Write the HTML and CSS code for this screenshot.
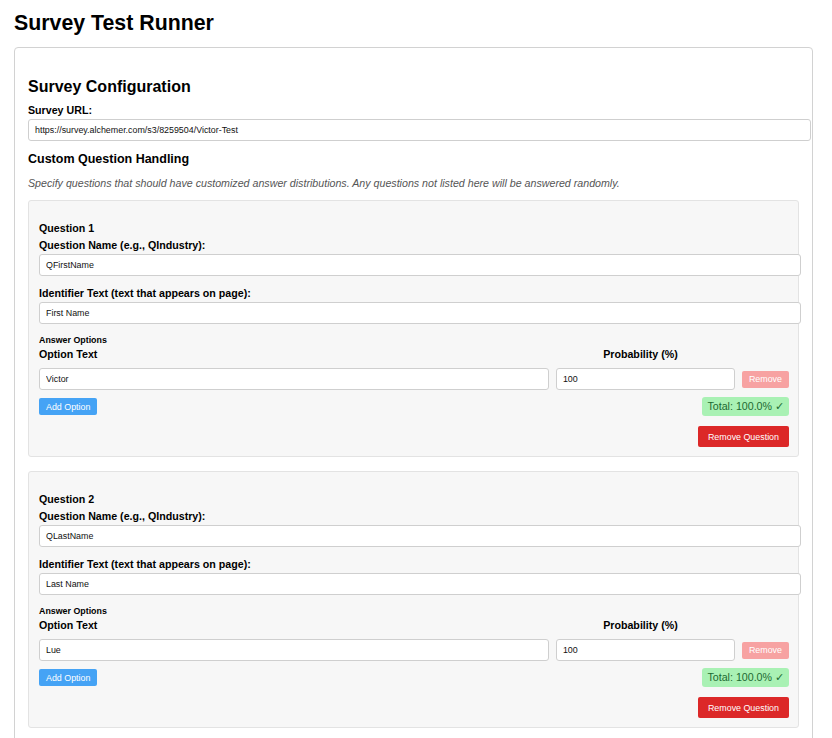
FILE: index.html
```html
<!DOCTYPE html>
<html lang="en">
<head>
<meta charset="utf-8">
<title>Survey Test Runner</title>
<link rel="stylesheet" href="styles.css">
</head>
<body>
<h1 class="page-title">Survey Test Runner</h1>
<div class="panel">
  <h2 class="panel-title">Survey Configuration</h2>
  <label class="field-label url-label">Survey URL:</label>
  <input class="text-input" type="text" value="https://survey.alchemer.com/s3/8259504/Victor-Test">

  <h3 class="section-title">Custom Question Handling</h3>
  <p class="section-desc">Specify questions that should have customized answer distributions. Any questions not listed here will be answered randomly.</p>

  <div class="question">
    <h4 class="question-title">Question 1</h4>
    <div class="field">
      <label class="field-label">Question Name (e.g., QIndustry):</label>
      <input class="text-input" type="text" value="QFirstName">
    </div>
    <div class="field">
      <label class="field-label">Identifier Text (text that appears on page):</label>
      <input class="text-input" type="text" value="First Name">
    </div>
    <h5 class="options-title">Answer Options</h5>
    <div class="options-head">
      <span class="col-text">Option Text</span>
      <span class="col-prob">Probability (%)</span>
    </div>
    <div class="option-row">
      <input class="text-input opt-text" type="text" value="Victor">
      <input class="text-input opt-prob" type="text" value="100">
      <button class="btn btn-remove" disabled>Remove</button>
    </div>
    <div class="option-actions">
      <button class="btn btn-add">Add Option</button>
      <span class="total-badge">Total: 100.0% ✓</span>
    </div>
    <div class="question-actions">
      <button class="btn btn-remove-q">Remove Question</button>
    </div>
  </div>

  <div class="question">
    <h4 class="question-title">Question 2</h4>
    <div class="field">
      <label class="field-label">Question Name (e.g., QIndustry):</label>
      <input class="text-input" type="text" value="QLastName">
    </div>
    <div class="field">
      <label class="field-label">Identifier Text (text that appears on page):</label>
      <input class="text-input" type="text" value="Last Name">
    </div>
    <h5 class="options-title">Answer Options</h5>
    <div class="options-head">
      <span class="col-text">Option Text</span>
      <span class="col-prob">Probability (%)</span>
    </div>
    <div class="option-row">
      <input class="text-input opt-text" type="text" value="Lue">
      <input class="text-input opt-prob" type="text" value="100">
      <button class="btn btn-remove" disabled>Remove</button>
    </div>
    <div class="option-actions">
      <button class="btn btn-add">Add Option</button>
      <span class="total-badge">Total: 100.0% ✓</span>
    </div>
    <div class="question-actions">
      <button class="btn btn-remove-q">Remove Question</button>
    </div>
  </div>
</div>
</body>
</html>
```

FILE: styles.css
```css
html, body {
  background: #ffffff;
}
body {
  margin: 0;
  padding: 11px 19px 0 14px;
  font-family: "Liberation Sans", Arial, sans-serif;
  font-size: 10.67px;
  color: #000;
  overflow: hidden;
}
.page-title {
  font-size: 21.33px;
  line-height: 25px;
  font-weight: bold;
  margin: 0 0 11px;
}
.panel {
  border: 1px solid #d2d2d2;
  border-radius: 4px;
  padding: 13px;
}
.panel-title {
  font-size: 16px;
  line-height: 18px;
  font-weight: bold;
  margin: 17px 0 8px;
}
.field-label {
  display: block;
  font-weight: bold;
  font-size: 10.67px;
  line-height: 13px;
  margin-bottom: 2px;
}
.text-input {
  display: block;
  box-sizing: border-box;
  width: calc(100% + 12px);
  height: 22px;
  padding: 0 6px;
  margin: 0;
  border: 1px solid #cfcfcf;
  border-radius: 3px;
  background: #fff;
  font-family: "Liberation Sans", Arial, sans-serif;
  font-size: 8.9px;
  color: #111;
  outline: none;
}
.section-title {
  font-size: 12.5px;
  line-height: 15px;
  font-weight: bold;
  margin: 11px 0 10px;
}
.section-desc {
  font-style: italic;
  color: #555;
  font-size: 10.67px;
  line-height: 13px;
  margin: 0 0 10px;
}
.question {
  background: #f7f7f7;
  border: 1px solid #e3e3e3;
  border-radius: 3px;
  padding: 10px 9px 9px 10px;
  margin-bottom: 14px;
}
.question-title {
  font-size: 10.67px;
  line-height: 12px;
  font-weight: bold;
  margin: 11px 0 5px;
}
.field {
  margin-bottom: 11px;
}
.options-title {
  font-size: 8.85px;
  line-height: 10px;
  font-weight: bold;
  margin: 0 0 3px;
}
.options-head {
  display: flex;
  gap: 6.67px;
  font-weight: bold;
  font-size: 10.67px;
  line-height: 13px;
  margin-bottom: 7px;
}
.col-text {
  flex: 3 1 0;
}
.col-prob {
  flex: 1 1 0;
}
.option-row {
  display: flex;
  align-items: center;
  gap: 6.67px;
  margin-bottom: 7px;
}
.option-row .text-input {
  width: auto;
  min-width: 0;
}
.opt-text {
  flex: 3 1 0;
}
.opt-prob {
  flex: 1 1 0;
}
.btn {
  border: none;
  border-radius: 2px;
  color: #fff;
  font-family: "Liberation Sans", Arial, sans-serif;
  font-size: 8.9px;
  padding: 0 7px;
  height: 17px;
  cursor: pointer;
}
.btn-remove {
  background: #f7a2a2;
  flex: none;
}
.btn-add {
  background: #45a3f5;
}
.option-actions {
  display: flex;
  justify-content: space-between;
  align-items: center;
  margin-bottom: 10px;
}
.total-badge {
  background: #a9f1b4;
  color: #1c6a32;
  font-size: 10.67px;
  line-height: 19px;
  height: 19px;
  padding: 0 5px;
  border-radius: 3px;
}
.question-actions {
  display: flex;
  justify-content: flex-end;
}
.btn-remove-q {
  background: #dc2828;
  height: 21px;
  padding: 0 10px;
}
```
